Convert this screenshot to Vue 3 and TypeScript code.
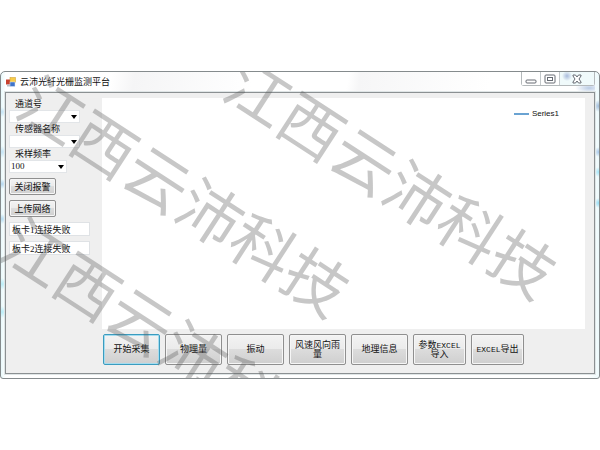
<script setup lang="ts">
import { ref } from 'vue'

const channel = ref('')
const sensor = ref('')
const rate = ref('100')
const board1 = ref('板卡1连接失败')
const board2 = ref('板卡2连接失败')

const actions: { label: string; latin?: string; narrow?: boolean }[] = [
  { label: '开始采集' },
  { label: '物理量' },
  { label: '振动' },
  { label: '风速风向雨量' },
  { label: '地理信息' },
  { label: '参数|导入', latin: 'EXCEL', narrow: true },
  { label: '|导出', latin: 'EXCEL', narrow: true },
]
</script>

<template>
  <main class="page">
    <section class="window">
      <header class="titlebar">
        <svg class="app-icon" viewBox="0 0 20 20" aria-hidden="true">
          <rect x="0" y="5" width="9" height="10" fill="#c8402e" />
          <rect x="8" y="1" width="11" height="10" fill="#f8cc48" stroke="#c99a2c" />
          <rect x="8" y="10" width="10" height="9" fill="#3f74c9" stroke="#dfe8f6" />
          <rect x="2" y="15" width="6" height="4" fill="#b9bec6" />
        </svg>
        <h1 class="title">云沛光纤光栅监测平台</h1>
        <div class="caption">
          <button type="button" aria-label="最小化">
            <svg viewBox="0 0 12 10"><rect x="1" y="6" width="10" height="3" rx="1" /></svg>
          </button>
          <button type="button" aria-label="最大化">
            <svg viewBox="0 0 12 10">
              <rect x="1" y="1" width="10" height="8" rx="1" />
              <rect x="3.500" y="3.500" width="5" height="3" />
            </svg>
          </button>
          <button type="button" class="close" aria-label="关闭">
            <svg viewBox="0 0 12 10">
              <path d="M2 1h2.500L6 3l1.500-2H10v1L8 5l2 3v1H7.500L6 7 4.500 9H2V8l2-3-2-3z" />
            </svg>
          </button>
        </div>
      </header>

      <div class="client">
        <aside class="sidebar">
          <label for="channel">通道号</label>
          <div class="combo">
            <select id="channel" v-model="channel"><option value=""></option></select>
            <svg viewBox="0 0 6 4"><path d="M0 0h6L3 4z" /></svg>
          </div>
          <label for="sensor">传感器名称</label>
          <div class="combo">
            <select id="sensor" v-model="sensor"><option value=""></option></select>
            <svg viewBox="0 0 6 4"><path d="M0 0h6L3 4z" /></svg>
          </div>
          <label for="rate">采样频率</label>
          <div class="combo short">
            <select id="rate" v-model="rate"><option>100</option></select>
            <svg viewBox="0 0 6 4"><path d="M0 0h6L3 4z" /></svg>
          </div>
          <button type="button" class="btn small">关闭报警</button>
          <button type="button" class="btn small">上传网络</button>
          <input v-model="board1" class="status" type="text" aria-label="板卡1" />
          <input v-model="board2" class="status" type="text" aria-label="板卡2" />
        </aside>

        <div class="content">
          <div class="chart">
            <div class="legend"><i></i><span>Series1</span></div>
          </div>
          <nav class="actions">
            <button
              v-for="(a, i) in actions"
              :key="i"
              type="button"
              class="btn large"
              :class="{ narrow: a.narrow, focused: i === 0 }"
            >
              <template v-if="a.latin">{{ a.label.split('|')[0] }}<span class="latin">{{ a.latin }}</span>{{ a.label.split('|')[1] }}</template>
              <template v-else>{{ a.label }}</template>
            </button>
          </nav>
        </div>
      </div>

      <div class="watermarks" aria-hidden="true">
        <span class="mark first">江西云沛科技</span>
        <span class="mark second">江西云沛科技</span>
        <span class="mark third">江西云沛科技</span>
      </div>
    </section>
  </main>
</template>

<style>
body {
  margin: 0;
  background: #fff;
}
</style>

<style scoped>
* {
  box-sizing: border-box;
}
.page {
  display: flex;
  min-height: 100vh;
  padding: 71px 0;
  font: 9px/12px "Liberation Serif", "Noto Sans CJK SC", sans-serif;
  color: #111;
}
button,
select,
input {
  font: inherit;
  color: inherit;
}
.window {
  position: relative;
  flex: 1;
  display: flex;
  flex-direction: column;
  padding: 0 4px 4px;
  border: 1px solid #858b8d;
  border-radius: 5px 5px 3px 3px;
  overflow: hidden;
  background:
    radial-gradient(circle at 1px 40px, #c4e4f5, transparent 5px),
    radial-gradient(circle at 1px 80px, #c4e4f5, transparent 6px),
    radial-gradient(circle at 1px 112px, #b4d6ee, transparent 5px),
    radial-gradient(circle at 1px 147px, #b4dcf2, transparent 5px),
    radial-gradient(circle at 1px 212px, #b9edf8, transparent 6px),
    radial-gradient(circle at 1px 240px, #b9edf8, transparent 6px),
    radial-gradient(circle at 100% 34px, #9db9d8, transparent 6px),
    radial-gradient(circle at 100% 80px, #a3c3e6, transparent 5px),
    radial-gradient(circle at 100% 100px, #9fe3f7, transparent 5px),
    radial-gradient(circle at 100% 131px, #8fd9f2, transparent 5px),
    linear-gradient(90deg, #e9f9fb, #fff 5px, #fff 98%, #eefafc);
}
.titlebar {
  display: flex;
  align-items: center;
  height: 20px;
  padding-left: 1px;
  background:
    radial-gradient(ellipse 14px 5px at 99% 16px, #b9cbe4, transparent),
    linear-gradient(100deg, #fff 18%, #f5f5f6 22%, #fff 42%, #fff 58%, #f6f6f7 60%, #fff 82%);
}
.app-icon {
  width: 10px;
  height: 10px;
}
.title {
  flex: 1;
  margin: 0 0 0 4px;
  font: inherit;
}
.caption {
  display: flex;
  align-self: flex-start;
  height: 14px;
  border: 1px solid #b4b9bb;
  border-top: 0;
  border-radius: 0 0 3px 3px;
}
.caption button {
  display: flex;
  align-items: center;
  justify-content: center;
  width: 19px;
  padding: 0;
  border: 0;
  border-right: 1px solid #c3c8ca;
  background: #fff;
}
.caption .close {
  width: 34px;
  border: 0;
  background: radial-gradient(circle at 7px 4px, #a9bbdc, transparent 5px), #f0fafb;
}
.caption svg {
  width: 12px;
  height: 10px;
  fill: #fff;
  stroke: #666b73;
}
.client {
  flex: 1;
  display: flex;
  padding: 5px 9px 8px 3px;
  border: 1px solid #8b9092;
  outline: 1px solid #dfe5e6;
  background: #efefef;
}
.sidebar {
  display: flex;
  flex-direction: column;
  align-items: flex-start;
  width: 93px;
}
.sidebar label {
  margin-left: 6px;
  height: 12px;
}
.combo {
  position: relative;
  width: 71px;
  height: 13px;
}
.combo.short {
  width: 58px;
}
.combo select {
  display: block;
  width: 100%;
  height: 100%;
  padding: 0 1px;
  border: 1px solid #e2e5e8;
  border-radius: 0;
  appearance: none;
  background: #fff;
  line-height: 11px;
}
.combo svg {
  position: absolute;
  right: 3px;
  top: 5px;
  width: 6px;
  height: 4px;
  pointer-events: none;
}
.btn {
  padding: 0;
  border: 1px solid #8f8f8f;
  border-radius: 2px;
  background: linear-gradient(#f3f3f3, #ebebeb 49%, #dcdcdc 50%, #cfcfcf);
  box-shadow: inset 0 0 0 1px #f6f6f6;
}
.small {
  width: 47px;
  height: 17px;
  margin-top: 5px;
}
.status {
  width: 81px;
  height: 14px;
  margin-top: 5px;
  padding: 0 2px;
  border: 1px solid #dfe2e5;
  background: #fff;
}
.content {
  flex: 1;
  display: flex;
  flex-direction: column;
  gap: 5px;
}
.chart {
  flex: 1;
  display: flex;
  justify-content: flex-end;
  align-items: flex-start;
  padding: 10px 26px;
  background: #fff;
}
.legend {
  display: flex;
  align-items: center;
  gap: 3px;
  font: 8px/12px "Liberation Sans", sans-serif;
}
.legend i {
  width: 15px;
  height: 2px;
  background: #6aa3d2;
}
.actions {
  display: flex;
  gap: 5px;
  padding-left: 1px;
}
.large {
  width: 57px;
  height: 31px;
  padding: 0 4px;
  line-height: 9px;
}
.large.narrow {
  width: 53px;
}
.latin {
  font: 8px/9px "Liberation Mono", monospace;
}
.focused {
  border-color: #3b9cbf;
  box-shadow: inset 0 0 0 1px #a5dcef;
}
.watermarks {
  position: absolute;
  inset: 0;
  pointer-events: none;
}
.mark {
  position: absolute;
  font: 63px/63px "Noto Sans CJK SC", sans-serif;
  white-space: nowrap;
  color: rgba(90, 90, 90, 0.34);
  transform: translate(-50%, -50%) rotate(33deg);
}
.first {
  left: 185px;
  top: 121px;
}
.second {
  left: 392px;
  top: 103px;
}
.third {
  left: 168px;
  top: 263px;
}
</style>
